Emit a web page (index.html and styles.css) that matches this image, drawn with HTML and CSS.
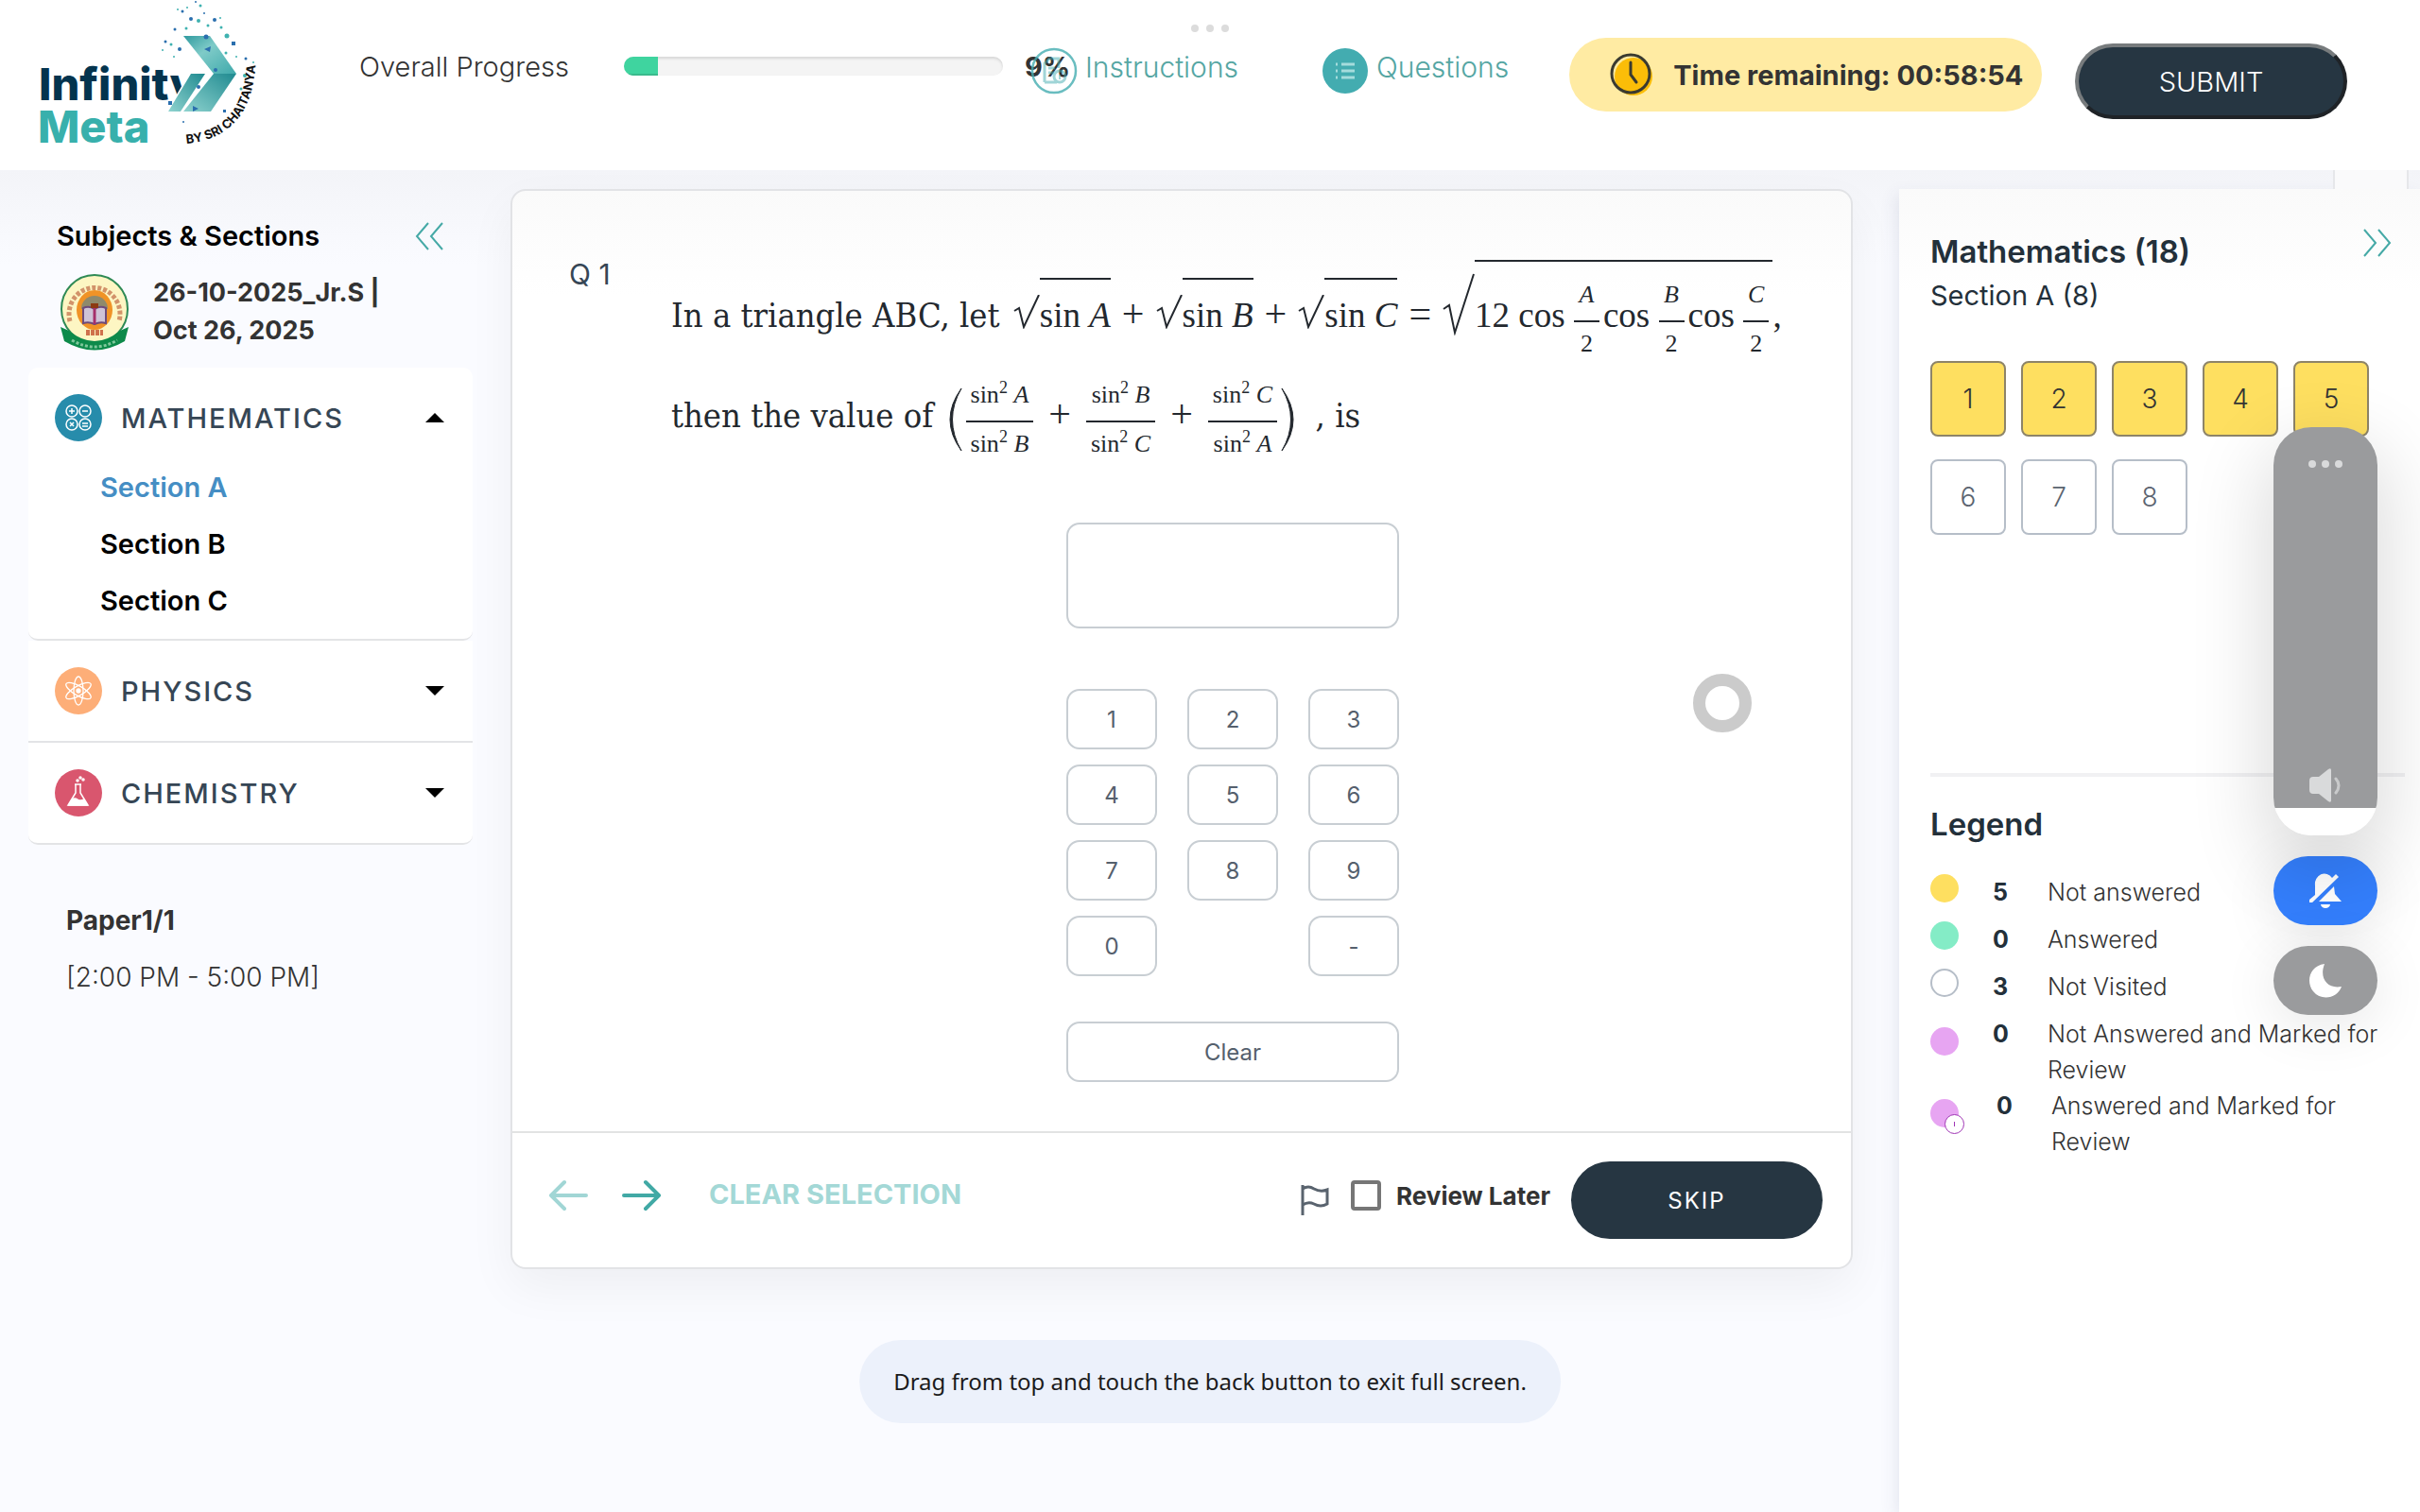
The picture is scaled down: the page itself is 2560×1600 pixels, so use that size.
FILE: index.html
```html
<!DOCTYPE html>
<html lang="en">
<head>
    <meta charset="UTF-8">
    <title>Infinity Meta - Test</title>
    <link rel="stylesheet" href="styles.css">
</head>
<body>
    <header class="topbar">
        <svg class="logo" viewBox="0 0 240 160" role="img" aria-label="Infinity Meta by Sri Chaitanya">
            <defs>
                <linearGradient id="arrowTop" x1="0" y1="0" x2="1" y2="1">
                    <stop offset="0" stop-color="#2f9a9f"/>
                    <stop offset="0.4" stop-color="#7fcbc8"/>
                    <stop offset="1" stop-color="#3fa9ab"/>
                </linearGradient>
                <linearGradient id="arrowBottom" x1="1" y1="0" x2="0" y2="1">
                    <stop offset="0" stop-color="#1f8a90"/>
                    <stop offset="1" stop-color="#8fd3cf"/>
                </linearGradient>
                <path id="arc" d="M155 152 Q222 146 228 72"/>
            </defs>
            <text class="logo-name" x="-1" y="106">Infinity</text>
            <text class="logo-meta" x="-2" y="151">Meta</text>
            <path d="M158 78 h14 v40 h-36 v-3z" fill="#fff"/>
            <path d="M152 38 h28 l28 40 h-24 z" fill="url(#arrowTop)"/>
            <path d="M184 78 h24 l-27 40 h-29 z" fill="url(#arrowBottom)"/>
            <path d="M160 78 h15 l-26 40 h-13 z" fill="url(#arrowBottom)"/>
            <g fill="#2b6fae">
                <circle cx="165" cy="2" r="1"/><circle cx="151" cy="12" r="1.5"/><circle cx="160" cy="20" r="2"/><circle cx="174" cy="14" r="1"/>
                <circle cx="185" cy="21" r="2"/><circle cx="143" cy="31" r="1.5"/><circle cx="148" cy="52" r="2"/><rect x="203" y="44" width="4" height="4"/>
                <circle cx="133" cy="44" r="1.5"/><circle cx="176" cy="39" r="2.5"/><path d="M174 52 l7 -3 -1 6z"/><path d="M162 112 l6 3 -6 3z"/><circle cx="168" cy="92" r="2"/>
                <circle cx="218" cy="62" r="1.5"/><rect x="194" y="116" width="3" height="3"/><circle cx="152" cy="129" r="1"/><rect x="136" y="107" width="4" height="4"/><circle cx="186" cy="74" r="2"/>
            </g>
            <g fill="#3fb2b0">
                <circle cx="146" cy="10" r="1"/><circle cx="156" cy="8" r="1"/><circle cx="170" cy="6" r="1.5"/><circle cx="168" cy="22" r="2"/>
                <circle cx="178" cy="27" r="1.5"/><circle cx="192" cy="29" r="1.5"/><circle cx="198" cy="38" r="2.5"/><circle cx="139" cy="47" r="1.5"/>
                <circle cx="155" cy="30" r="1.5"/><circle cx="130" cy="53" r="1"/><circle cx="142" cy="60" r="1"/><circle cx="197" cy="56" r="1.5"/>
                <circle cx="208" cy="60" r="1"/><circle cx="217" cy="80" r="2"/><circle cx="213" cy="94" r="1.5"/><circle cx="191" cy="19" r="1"/><circle cx="226" cy="66" r="1"/>
            </g>
            <text class="logo-by"><textPath href="#arc">BY SRI CHAITANYA</textPath></text>
        </svg>

        <div class="progress">
            <label for="overall">Overall Progress</label>
            <div class="progress-bar" id="overall"><span class="progress-fill" style="width: 9%"></span></div>
            <strong>9%</strong>
        </div>

        <nav class="links">
            <a href="#" class="link-instructions">
                <svg width="50" height="50" viewBox="0 0 50 50" fill="none" stroke="#43acb0">
                    <circle cx="25" cy="25" r="23" stroke-width="2.5" opacity="0.8"/>
                    <g opacity="0.5">
                        <path d="M15 37 V17 l5 -5 h10 v10 M15 37 h13 M19 22 h7 M19 27 h6" stroke-width="3"/>
                        <circle cx="31" cy="31" r="6" stroke-width="3"/><path d="M31 29 v5" stroke-width="2"/>
                    </g>
                </svg>
                <span>Instructions</span>
            </a>
            <a href="#" class="link-questions">
                <svg width="50" height="50" viewBox="0 0 50 50">
                    <circle cx="25" cy="25" r="24" fill="#43acb0"/>
                    <path d="M15 18 h2 M15 25 h2 M15 32 h2 M21 18 h14 M21 25 h14 M21 32 h14" stroke="#a5dcdc" stroke-width="3"/>
                </svg>
                <span>Questions</span>
            </a>
        </nav>

        <div class="timer">
            <svg width="46" height="46" viewBox="0 0 46 46" fill="none">
                <circle cx="25" cy="25" r="20" fill="#fbbd08"/>
                <circle cx="22" cy="22" r="20" stroke="#3a3a30" stroke-width="3"/>
                <path d="M22 10 v13 l6 8" stroke="#3a3a30" stroke-width="3" stroke-linecap="round"/>
            </svg>
            <span>Time remaining: 00:58:54</span>
        </div>

        <button type="button" class="submit">SUBMIT</button>
    </header>

    <div class="window-dots"><i></i><i></i><i></i></div>

    <main class="layout">
        <aside class="sidebar">
            <div class="sidebar-title">
                <h2>Subjects &amp; Sections</h2>
                <button type="button" class="chevrons" aria-label="Collapse">
                    <svg width="32" height="32" viewBox="0 0 32 32"><path d="M15 3 L3 17 L15 31 M30 3 L18 17 L30 31"/></svg>
                </button>
            </div>

            <div class="exam">
                <svg width="76" height="82" viewBox="0 0 76 82">
                    <ellipse cx="38" cy="37" rx="35" ry="36" fill="#fdf6c3" stroke="#2f8a55" stroke-width="2"/>
                    <path d="M12 50 A27 28 0 1 1 64 50" fill="none" stroke="#b5512f" stroke-width="5" stroke-dasharray="4 2" opacity="0.6"/>
                    <ellipse cx="38" cy="38" rx="19" ry="21" fill="#f09326"/>
                    <path d="M24 37 a14 14 0 0 1 28 0" fill="#8f8a6c"/>
                    <path d="M26 36 q6 -3 12 1 q6 -4 12 -1 v16 q-6 -2 -12 1 q-6 -3 -12 -1z" fill="#cfc3d6" stroke="#6d4b7a" stroke-width="2"/>
                    <path d="M38 36 v17" stroke="#a5306b" stroke-width="3"/>
                    <rect x="34" y="31" width="8" height="5" fill="#8c3a12"/>
                    <path d="M2 56 L11 60 Q38 82 65 60 L74 56 L70 71 Q38 90 6 71 Z" fill="#0d8a4a"/>
                    <path d="M29 62 h18" stroke="#c4502f" stroke-width="6" stroke-dasharray="4 1" opacity="0.8"/>
                    <path d="M14 70 Q38 84 62 70" fill="none" stroke="#7fc79b" stroke-width="3" stroke-dasharray="3 2"/>
                </svg>
                <p>26-10-2025_Jr.S | Oct 26, 2025</p>
            </div>

            <div class="subjects">
                <section class="subject open">
                    <button type="button" class="subject-head">
                        <svg width="52" height="52" viewBox="0 0 52 52" fill="none" stroke="#fff" stroke-width="1.5">
                            <circle cx="26" cy="26" r="25" fill="#278cab" stroke="none"/>
                            <circle cx="19" cy="19" r="6"/><circle cx="33" cy="19" r="6"/><circle cx="19" cy="33" r="6"/><circle cx="33" cy="33" r="6"/>
                            <path d="M16 19 h6 M19 16 v6 M30 19 h6 M17 31 l4 4 M21 31 l-4 4 M30 32 h6 M30 35 h6"/>
                        </svg>
                        <span>MATHEMATICS</span>
                        <i class="caret"></i>
                    </button>
                    <ul>
                        <li><a href="#" class="active">Section A</a></li>
                        <li><a href="#">Section B</a></li>
                        <li><a href="#">Section C</a></li>
                    </ul>
                </section>
                <section class="subject">
                    <button type="button" class="subject-head">
                        <svg width="52" height="52" viewBox="0 0 52 52" fill="none" stroke="#fff" stroke-width="1.3">
                            <circle cx="26" cy="26" r="25" fill="#fdae78" stroke="none"/>
                            <ellipse cx="26" cy="26" rx="5" ry="15"/>
                            <ellipse cx="26" cy="26" rx="5" ry="15" transform="rotate(60 26 26)"/>
                            <ellipse cx="26" cy="26" rx="5" ry="15" transform="rotate(120 26 26)"/>
                            <circle cx="26" cy="26" r="2" fill="#fff"/>
                        </svg>
                        <span>PHYSICS</span>
                        <i class="caret"></i>
                    </button>
                </section>
                <section class="subject">
                    <button type="button" class="subject-head">
                        <svg width="52" height="52" viewBox="0 0 52 52" fill="none" stroke="#fff" stroke-width="1.5">
                            <circle cx="26" cy="26" r="25" fill="#d9566e" stroke="none"/>
                            <path d="M22 17 h7 M23 17 v9 l-8 13 h21 l-8 -13 v-9"/>
                            <path d="M19 33 q3 -2 6 0 t7 0 l3 6 h-19z" fill="#fff"/>
                            <circle cx="25" cy="13" r="1"/><circle cx="28" cy="10" r="1"/><circle cx="31" cy="12" r="1"/>
                        </svg>
                        <span>CHEMISTRY</span>
                        <i class="caret"></i>
                    </button>
                </section>
            </div>

            <div class="paper">
                <strong>Paper1/1</strong>
                <span>[2:00 PM - 5:00 PM]</span>
            </div>
        </aside>

        <section class="card">
            <div class="card-body">
                <div class="question-no">Q 1</div>
                <div class="question">
                    <div class="statement">
                        <div class="line">In a triangle ABC, let
                            <span class="math"><svg class="root" width="28" height="36" viewBox="0 0 28 36"><path d="M1 17 L6 14 L11 34 L27 0"/></svg><span class="radicand">sin <em>A</em></span><span class="op">+</span><svg class="root" width="28" height="36" viewBox="0 0 28 36"><path d="M1 17 L6 14 L11 34 L27 0"/></svg><span class="radicand">sin <em>B</em></span><span class="op">+</span><svg class="root" width="28" height="36" viewBox="0 0 28 36"><path d="M1 17 L6 14 L11 34 L27 0"/></svg><span class="radicand">sin <em>C</em></span><span class="op">=</span><svg class="root big" width="34" height="66" viewBox="0 0 34 66"><path d="M1 38 L7 34 L13 63 L33 1"/></svg><span class="radicand">12 cos <span class="frac"><span><em>A</em></span><span>2</span></span>cos <span class="frac"><span><em>B</em></span><span>2</span></span>cos <span class="frac"><span><em>C</em></span><span>2</span></span></span>,</span>
                        </div>
                        <div class="line">then the value of
                            <span class="math"><svg class="paren" width="16" height="66" viewBox="0 0 16 66"><path d="M15 0 Q-9 33 15 66 Q-4 33 15 0"/></svg><span class="frac wide"><span>sin<sup>2</sup> <em>A</em></span><span>sin<sup>2</sup> <em>B</em></span></span><span class="op">+</span><span class="frac wide"><span>sin<sup>2</sup> <em>B</em></span><span>sin<sup>2</sup> <em>C</em></span></span><span class="op">+</span><span class="frac wide"><span>sin<sup>2</sup> <em>C</em></span><span>sin<sup>2</sup> <em>A</em></span></span><svg class="paren" width="16" height="66" viewBox="0 0 16 66"><path d="M1 0 Q25 33 1 66 Q20 33 1 0"/></svg></span>
                            &nbsp;, is
                        </div>
                    </div>

                    <div class="answer">
                        <input type="text" aria-label="Answer">
                        <div class="keypad">
                            <button type="button">1</button>
                            <button type="button">2</button>
                            <button type="button">3</button>
                            <button type="button">4</button>
                            <button type="button">5</button>
                            <button type="button">6</button>
                            <button type="button">7</button>
                            <button type="button">8</button>
                            <button type="button">9</button>
                            <button type="button">0</button>
                            <button type="button" class="minus">-</button>
                        </div>
                        <button type="button" class="clear">Clear</button>
                    </div>
                </div>
            </div>

            <footer class="card-footer">
                <button type="button" class="arrow faded" aria-label="Previous">
                    <svg width="42" height="34" viewBox="0 0 42 34"><path d="M40 17 H3 M17 3 L3 17 L17 31"/></svg>
                </button>
                <button type="button" class="arrow" aria-label="Next">
                    <svg width="42" height="34" viewBox="0 0 42 34"><path d="M2 17 H39 M25 3 L39 17 L25 31"/></svg>
                </button>
                <button type="button" class="clear-selection">CLEAR SELECTION</button>
                <svg class="flag" width="32" height="34" viewBox="0 0 32 34"><path d="M3 1 V33 M3 5 Q9 1 15 5 Q22 9 29 6 V21 Q22 25 15 21 Q9 18 3 22"/></svg>
                <label class="review"><input type="checkbox"> Review Later</label>
                <button type="button" class="skip">SKIP</button>
            </footer>
        </section>

        <div class="side-tab"></div>
        <aside class="palette">
            <div class="palette-title">
                <div>
                    <h2>Mathematics (18)</h2>
                    <p>Section A (8)</p>
                </div>
                <button type="button" class="chevrons" aria-label="Collapse">
                    <svg width="32" height="32" viewBox="0 0 32 32"><path d="M3 1 L15 15 L3 29 M18 1 L30 15 L18 29"/></svg>
                </button>
            </div>

            <div class="numbers">
                <button type="button" class="seen">1</button>
                <button type="button" class="seen">2</button>
                <button type="button" class="seen">3</button>
                <button type="button" class="seen">4</button>
                <button type="button" class="seen">5</button>
                <button type="button">6</button>
                <button type="button">7</button>
                <button type="button">8</button>
            </div>

            <div class="legend">
                <h3>Legend</h3>
                <ul>
                    <li><i class="dot yellow"></i><b>5</b><span>Not answered</span></li>
                    <li><i class="dot green"></i><b>0</b><span>Answered</span></li>
                    <li><i class="dot empty"></i><b>3</b><span>Not Visited</span></li>
                    <li class="long"><i class="dot pink"></i><b>0</b><span>Not Answered and Marked for Review</span></li>
                    <li class="long marked"><i class="dot pink"></i><b>0</b><span>Answered and Marked for Review</span></li>
                </ul>
            </div>
        </aside>
    </main>

    <!-- volume panel on top of everything -->
    <div class="volume">
        <div class="volume-slider">
            <input type="range" min="0" max="100" value="7" aria-label="Volume">
            <svg class="volume-dots" width="36" height="8" viewBox="0 0 36 8" fill="#d9dadb"><circle cx="4" cy="4" r="4"/><circle cx="18" cy="4" r="4"/><circle cx="32" cy="4" r="4"/></svg>
            <svg class="speaker" width="36" height="36" viewBox="0 0 36 36">
                <path d="M1 13 q0 -4 4 -4 h6 l10 -8 q3 -2 3 1 v32 q0 3 -3 1 l-10 -8 h-6 q-4 0 -4 -4z" fill="#d9dadb"/>
                <path d="M29 11 q6 7 0 15" fill="none" stroke="#c9cacb" stroke-width="3" stroke-linecap="round"/>
            </svg>
        </div>
        <button type="button" class="pill blue" aria-label="Mute">
            <svg width="36" height="38" viewBox="0 0 36 38" fill="#fff">
                <path d="M7 23 V13 a10 11 0 0 1 18 -8 L29 1 l3 3 L4 31 H1 v-3z M11 30 L27 14 L28 22 L35 30z"/>
                <path d="M13 33 h10 a5 4 0 0 1 -10 0z"/>
            </svg>
        </button>
        <button type="button" class="pill" aria-label="Do not disturb">
            <svg width="36" height="38" viewBox="0 0 36 38"><path d="M17 1 C1 3 -3 20 5 30 C14 41 31 37 35 25 C20 28 11 16 17 1z" fill="#fff"/></svg>
        </button>
    </div>

    <div class="touch"></div>
    <div class="toast">Drag from top and touch the back button to exit full screen.</div>
</body>
</html>
```
FILE: styles.css
```css
* {
    box-sizing: border-box;
}

body {
    margin: 0;
    min-height: 100vh;
    display: flex;
    flex-direction: column;
    overflow: hidden;
    background-color: #fafbff;
    color: #333;
    font-family: Inter, "Open Sans", sans-serif;
    font-size: 29px;
}

button,
input {
    font-family: inherit;
    color: inherit;
}

button {
    padding: 0;
    border: none;
    background: none;
    cursor: pointer;
}

a {
    text-decoration: none;
}

h2, h3, p, ul {
    margin: 0;
    padding: 0;
}

ul {
    list-style: none;
}

svg {
    flex: none;
}

/* Top bar */
.topbar {
    height: 180px;
    display: flex;
    align-items: flex-start;
    background-color: #fff;
}

.logo {
    width: 240px;
    height: 160px;
    margin-left: 42px;
    overflow: visible;
}

.logo-name,
.logo-meta {
    font-family: Inter, sans-serif;
    font-weight: 800;
    font-size: 47px;
    fill: #04344e;
}

.logo-meta {
    fill: #38b0ac;
}

.logo-by {
    font-size: 13px;
    font-weight: 700;
    fill: #111;
}

.progress {
    display: flex;
    align-items: center;
    height: 40px;
    margin: 50px 0 0 98px;
}

.progress label {
    width: 280px;
    font-weight: 300;
}

.progress-bar {
    width: 401px;
    height: 20px;
    border-radius: 10px;
    overflow: hidden;
    background-color: #f4f4f4;
    box-shadow: inset 0 2px 3px rgba(0, 0, 0, 0.12);
}

.progress-fill {
    display: block;
    height: 100%;
    background-color: #3fd49f;
    box-shadow: inset 0 -2px 0 #3aba8c;
}

.progress strong {
    width: 54px;
    margin-left: 23px;
}

.links {
    display: flex;
    gap: 88px;
    margin-top: 50px;
    margin-left: -48px;
}

.links a {
    display: flex;
    gap: 8px;
    color: #55a6a3;
    font-size: 30px;
    font-weight: 300;
    line-height: 42px;
}

.link-questions {
    margin-right: 64px;
}

.timer {
    flex: none;
    width: 500px;
    height: 78px;
    margin-top: 40px;
    padding-left: 43px;
    display: flex;
    align-items: center;
    gap: 21px;
    border-radius: 39px;
    background-color: #ffeba3;
    font-weight: 700;
}

.submit {
    width: 288px;
    height: 80px;
    margin: 46px 77px 0 auto;
    border: 4px solid;
    border-color: #777b7d #1f2327 #1f2327 #777b7d;
    border-radius: 40px;
    background-color: #263642;
    color: #fff;
    font-size: 29px;
    font-weight: 300;
}

.window-dots {
    position: absolute;
    top: 26px;
    left: 0;
    right: 0;
    display: flex;
    justify-content: center;
    gap: 8px;
}

.window-dots i {
    width: 8px;
    height: 8px;
    border-radius: 50%;
    background-color: #dcdcdc;
}

/* Page */
.layout {
    position: relative;
    flex: 1;
    display: flex;
    align-items: stretch;
    padding-top: 20px;
    background: linear-gradient(#f3f4f8, #fafbff 100px);
}

.sidebar {
    width: 500px;
    margin-right: 40px;
    padding: 28px 0 0 30px;
}

.sidebar-title {
    display: flex;
    justify-content: space-between;
    align-items: center;
    height: 42px;
    padding: 0 30px;
}

.sidebar-title h2 {
    font-size: 29px;
    font-weight: 600;
    color: #000;
}

.chevrons {
    height: 32px;
}

.chevrons path {
    fill: none;
    stroke: #45a9a6;
    stroke-width: 2;
}

.exam {
    display: flex;
    gap: 24px;
    height: 99px;
    margin-top: 20px;
    padding-left: 32px;
}

.exam p {
    width: 250px;
    font-size: 27px;
    font-weight: 700;
    line-height: 40px;
    color: #333;
}

.subject {
    border-bottom: 2px solid #e3e4e6;
    background-color: #fff;
}

.subject.open {
    border-radius: 10px;
}

.subject:last-child {
    border-radius: 0 0 10px 10px;
}

.subject-head {
    width: 100%;
    display: flex;
    align-items: center;
    padding: 27px 30px 27px 27px;
    font-size: 29px;
    font-weight: 500;
    letter-spacing: 2px;
    color: #364655;
}

.open .subject-head {
    padding-bottom: 18px;
}

.subject-head span {
    margin: 0 auto 0 19px;
}

.caret {
    border: 10px solid transparent;
    border-top-color: #000;
    border-bottom: none;
}

.open .caret {
    border-top: none;
    border-bottom: 10px solid #000;
}

.subject ul {
    padding: 0 0 10px 76px;
}

.subject li {
    line-height: 60px;
}

.subject a {
    color: #000;
    font-weight: 600;
}

.subject a.active {
    color: #458ec4;
}

.paper {
    display: grid;
    margin: 50px 0 0 40px;
    font-size: 28px;
    line-height: 60px;
}

.paper span {
    font-weight: 300;
}

/* Question card */
.card {
    flex: 1;
    align-self: flex-start;
    border: 2px solid #e2e3e6;
    border-radius: 16px;
    background: linear-gradient(#fafafa, #fff 110px);
    box-shadow: 0 20px 50px rgba(0, 0, 0, 0.05);
}

.card-body {
    display: flex;
    min-height: 995px;
    padding: 68px 60px 0;
}

.question-no {
    width: 108px;
    font-size: 30px;
    line-height: 40px;
    color: #364655;
}

.question {
    flex: 1;
}

.statement {
    padding-top: 5px;
    font-family: "DejaVu Serif Condensed", "Liberation Serif", serif;
    font-size: 36px;
    color: #23282e;
    white-space: nowrap;
}

.line {
    line-height: 106px;
}

.math {
    margin-left: 4px;
    font-family: "Liberation Serif", serif;
    font-size: 37px;
}

.radicand {
    display: inline-block;
    padding-top: 20px;
    border-top: 2px solid #23282e;
    line-height: 36px;
}

.root {
    vertical-align: -2px;
}

.root.big {
    vertical-align: -9px;
}

.root path {
    fill: none;
    stroke: #23282e;
    stroke-width: 2;
}

.paren {
    vertical-align: middle;
}

.paren path {
    fill: #23282e;
    stroke: #23282e;
    stroke-width: 1;
}

.op {
    margin: 0 12px;
    font-size: 42px;
    line-height: 0;
}

.frac {
    display: inline-block;
    min-width: 27px;
    margin-right: 4px;
    vertical-align: middle;
    font-size: 26px;
    line-height: 30px;
    text-align: center;
}

.frac.wide {
    margin: 0 4px;
}

.frac > span {
    display: block;
    padding: 0 5px 12px;
}

.frac > span + span {
    padding: 8px 5px 0;
    border-top: 2px solid #23282e;
}

.frac sup {
    font-size: 18px;
    line-height: 0;
}

.answer {
    width: 352px;
    margin: 60px auto 0;
}

.answer input,
.answer button {
    height: 64px;
    border: 2px solid #c8ced3;
    border-radius: 14px;
    background-color: #fff;
    font-size: 24px;
    color: #55606d;
}

.answer input {
    width: 100%;
    height: 112px;
    padding: 0 20px;
}

.keypad {
    display: grid;
    grid-template-columns: repeat(3, 1fr);
    gap: 16px 32px;
    margin: 64px 0 48px;
}

.keypad .minus {
    grid-column: 3;
}

.answer .clear {
    width: 100%;
}

.card-footer {
    display: flex;
    align-items: center;
    height: 144px;
    padding: 0 30px 0 38px;
    border-top: 2px solid #e2e3e3;
}

.arrow {
    height: 34px;
    margin: 0 36px 10px 0;
}

.arrow path {
    fill: none;
    stroke: #41a9a5;
    stroke-width: 4;
    stroke-linecap: round;
    stroke-linejoin: round;
}

.arrow.faded path {
    stroke: #a1d6d5;
}

.clear-selection {
    margin: 0 0 14px 14px;
    font-size: 29px;
    font-weight: 700;
    color: #a3d8d6;
}

.flag {
    margin: 0 22px 0 auto;
}

.flag path {
    fill: none;
    stroke: #59636e;
    stroke-width: 3;
}

.review {
    display: flex;
    align-items: center;
    gap: 16px;
    margin: 0 22px 10px 0;
    font-size: 26px;
    font-weight: 700;
}

.review input {
    appearance: none;
    width: 32px;
    height: 32px;
    margin: 0;
    border: 4px solid #767676;
    border-radius: 4px;
    background-color: #fff;
}

.skip {
    width: 266px;
    height: 82px;
    border-radius: 41px;
    background-color: #263642;
    color: #fff;
    font-size: 24px;
    letter-spacing: 2px;
}

/* Question palette */
.side-tab {
    position: absolute;
    top: 0;
    right: 12px;
    width: 80px;
    height: 20px;
    border: 2px solid #e6e7ea;
    border-width: 0 2px;
    background-color: #fafafb;
}

.palette {
    width: 551px;
    margin-left: 49px;
    padding: 42px 16px 0 33px;
    background: linear-gradient(#fafafa, #fff 110px);
    box-shadow: -4px 6px 16px rgba(60, 70, 120, 0.1);
}

.palette-title {
    display: flex;
    justify-content: space-between;
    padding-right: 14px;
    color: #23303a;
}

.palette-title h2 {
    font-size: 33px;
    font-weight: 600;
    line-height: 48px;
}

.palette-title p {
    line-height: 46px;
}

.numbers {
    display: grid;
    grid-template-columns: repeat(5, 80px);
    align-content: start;
    gap: 24px 16px;
    height: 440px;
    margin-top: 46px;
    border-bottom: 4px solid #f1f1f3;
}

.numbers button {
    height: 80px;
    border: 2px solid #b6bec8;
    border-radius: 8px;
    background-color: #fff;
    color: #5b6470;
    font-size: 28px;
    font-weight: 300;
}

.numbers .seen {
    border-color: #8d8468;
    background-color: #fedf60;
    color: #333;
}

.legend h3 {
    margin: 28px 0 30px;
    font-size: 33px;
    font-weight: 600;
    line-height: 45px;
    color: #23303a;
}

.legend ul {
    font-size: 25px;
    line-height: 38px;
}

.legend li {
    display: flex;
    align-items: flex-start;
    margin-bottom: 12px;
}

.legend .long {
    margin-bottom: 0;
}

.legend b {
    width: 58px;
    margin-left: 36px;
    color: #23303a;
}

.legend span {
    flex: 1;
    font-weight: 300;
}

.dot {
    position: relative;
    width: 30px;
    height: 30px;
    border-radius: 50%;
}

.long .dot {
    margin-top: 12px;
}

.marked b {
    margin-left: 40px;
}

.marked span {
    margin-right: 20px;
}

.dot.yellow {
    background-color: #fedf60;
}

.dot.green {
    background-color: #84ecc6;
}

.dot.empty {
    border: 2px solid #b6bec8;
}

.dot.pink {
    background-color: #e7a5f2;
}

.marked .dot::after {
    content: "";
    position: absolute;
    left: 15px;
    top: 16px;
    width: 19px;
    height: 19px;
    border: 1px solid #a035b5;
    border-radius: 50%;
    background: linear-gradient(#a035b5, #a035b5) center / 1px 5px no-repeat #fff;
}

/* Overlays */
.volume {
    position: absolute;
    top: 452px;
    right: 45px;
    width: 110px;
    display: grid;
    gap: 22px;
}

.volume-slider {
    position: relative;
    height: 432px;
    border-radius: 40px;
    box-shadow: 0 30px 80px 10px rgba(0, 0, 0, 0.14);
}

.volume-slider input {
    appearance: none;
    writing-mode: vertical-lr;
    direction: rtl;
    display: block;
    width: 110px;
    height: 432px;
    margin: 0;
    border-radius: 40px;
    background: linear-gradient(to top, #fff 29px, #9a9b9d 29px);
}

.volume-slider input::-webkit-slider-thumb {
    appearance: none;
    width: 110px;
    height: 1px;
}

.volume-dots,
.speaker {
    position: absolute;
    left: 37px;
    top: 35px;
}

.speaker {
    top: 361px;
}

.pill {
    display: flex;
    align-items: center;
    justify-content: center;
    height: 73px;
    border-radius: 37px;
    background-color: #9a9b9d;
    box-shadow: 0 10px 60px rgba(0, 0, 0, 0.1);
}

.pill.blue {
    background-color: #347ffd;
}

.touch {
    position: absolute;
    top: 713px;
    right: 707px;
    width: 62px;
    height: 62px;
    border: 13px solid #cbcbcb;
    border-radius: 50%;
    background-color: #fff;
}

.toast {
    position: absolute;
    bottom: 94px;
    left: 50%;
    transform: translateX(-50%);
    padding: 0 36px;
    border-radius: 44px;
    background-color: #ecf1fb;
    color: #1b1b1b;
    font-family: "Noto Sans", sans-serif;
    font-size: 24px;
    line-height: 88px;
    white-space: nowrap;
}
```
